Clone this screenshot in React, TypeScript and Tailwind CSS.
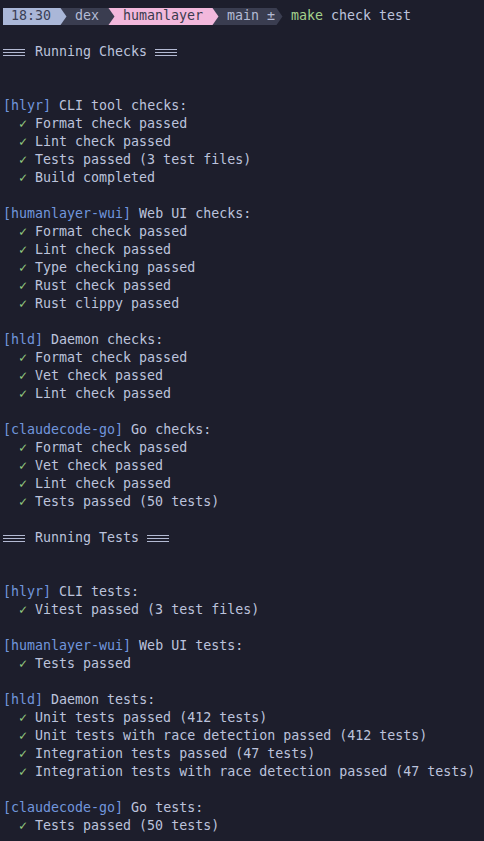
import React from "react";

type Line =
  | { kind: "blank" }
  | { kind: "title"; text: string }
  | { kind: "head"; tag: string; text: string }
  | { kind: "ok"; text: string };

const blank: Line = { kind: "blank" };

const lines: Line[] = [
  blank,
  { kind: "title", text: "Running Checks" },
  blank,
  blank,
  { kind: "head", tag: "hlyr", text: "CLI tool checks:" },
  { kind: "ok", text: "Format check passed" },
  { kind: "ok", text: "Lint check passed" },
  { kind: "ok", text: "Tests passed (3 test files)" },
  { kind: "ok", text: "Build completed" },
  blank,
  { kind: "head", tag: "humanlayer-wui", text: "Web UI checks:" },
  { kind: "ok", text: "Format check passed" },
  { kind: "ok", text: "Lint check passed" },
  { kind: "ok", text: "Type checking passed" },
  { kind: "ok", text: "Rust check passed" },
  { kind: "ok", text: "Rust clippy passed" },
  blank,
  { kind: "head", tag: "hld", text: "Daemon checks:" },
  { kind: "ok", text: "Format check passed" },
  { kind: "ok", text: "Vet check passed" },
  { kind: "ok", text: "Lint check passed" },
  blank,
  { kind: "head", tag: "claudecode-go", text: "Go checks:" },
  { kind: "ok", text: "Format check passed" },
  { kind: "ok", text: "Vet check passed" },
  { kind: "ok", text: "Lint check passed" },
  { kind: "ok", text: "Tests passed (50 tests)" },
  blank,
  { kind: "title", text: "Running Tests" },
  blank,
  blank,
  { kind: "head", tag: "hlyr", text: "CLI tests:" },
  { kind: "ok", text: "Vitest passed (3 test files)" },
  blank,
  { kind: "head", tag: "humanlayer-wui", text: "Web UI tests:" },
  { kind: "ok", text: "Tests passed" },
  blank,
  { kind: "head", tag: "hld", text: "Daemon tests:" },
  { kind: "ok", text: "Unit tests passed (412 tests)" },
  { kind: "ok", text: "Unit tests with race detection passed (412 tests)" },
  { kind: "ok", text: "Integration tests passed (47 tests)" },
  { kind: "ok", text: "Integration tests with race detection passed (47 tests)" },
  blank,
  { kind: "head", tag: "claudecode-go", text: "Go tests:" },
  { kind: "ok", text: "Tests passed (50 tests)" },
];

// powerline separator, drawn in the colour of the segment it closes
const Arrow = ({ fill, bg }: { fill: string; bg: string }) => (
  <svg width="8" height="17" viewBox="0 0 8 17" className="block shrink-0">
    <rect width="8" height="17" fill={bg} />
    <path d="M0 0 L1.5 0 L7.5 8.5 L1.5 17 L0 17 Z" fill={fill} />
  </svg>
);

// the "===" ligature of the terminal font
const Rule = () => (
  <span className="relative inline-block w-[24px] h-[18px] align-top">
    <span className="absolute left-0 right-[2px] top-[6px] h-px bg-[#b3bad3]" />
    <span className="absolute left-0 right-[2px] top-[9px] h-px bg-[#b3bad3]" />
    <span className="absolute left-0 right-[2px] top-[12px] h-px bg-[#b3bad3]" />
    <span className="text-transparent select-none">===</span>
  </span>
);

const App = () => {
  return (
    <div
      className="w-[484px] h-[841px] overflow-hidden bg-[#1d1e2c] text-[#bcc3dc] text-[13.3px] leading-[18px] pl-[3px] pt-[7px]"
      style={{ fontFamily: '"DejaVu Sans Mono", "Liberation Mono", monospace' }}
    >
      {/* prompt */}
      <div className="flex items-center h-[18px] whitespace-pre">
        <div className="flex items-center h-[17px] w-[56px] bg-[#aab7d8] text-[#3a3f55]">
          {" 18:30 "}
        </div>
        <Arrow fill="#aab7d8" bg="#3a3d50" />
        <div className="flex items-center h-[17px] w-[40px] bg-[#3a3d50] text-[#b4bbd5]">
          {" dex "}
        </div>
        <Arrow fill="#3a3d50" bg="#f2b8dc" />
        <div className="flex items-center h-[17px] w-[96px] bg-[#f2b8dc] text-[#3a3b4e]">
          {" humanlayer "}
        </div>
        <Arrow fill="#f2b8dc" bg="#3a3d50" />
        <div className="flex items-center h-[17px] w-[56px] bg-[#3a3d50] text-[#b4bbd5]">
          {" main ±"}
        </div>
        <Arrow fill="#3a3d50" bg="#1d1e2c" />
        <span>{" "}</span>
        <span className="text-[#a3d18c]">make</span>
        <span>{" check test"}</span>
      </div>

      {lines.map((line, i) => {
        if (line.kind == "blank") {
          return <div key={i} className="h-[18px]" />;
        }
        if (line.kind == "title") {
          return (
            <div key={i} className="h-[18px] whitespace-pre">
              <Rule />
              {" " + line.text + " "}
              <Rule />
            </div>
          );
        }
        if (line.kind == "head") {
          return (
            <div key={i} className="h-[18px] whitespace-pre">
              <span className="text-[#7196dd]">[{line.tag}]</span>
              {" " + line.text}
            </div>
          );
        }
        return (
          <div key={i} className="h-[18px] whitespace-pre">
            {"  "}
            <span className="text-[#93c97f]">✓</span>
            {" " + line.text}
          </div>
        );
      })}
    </div>
  );
};

export default App;
